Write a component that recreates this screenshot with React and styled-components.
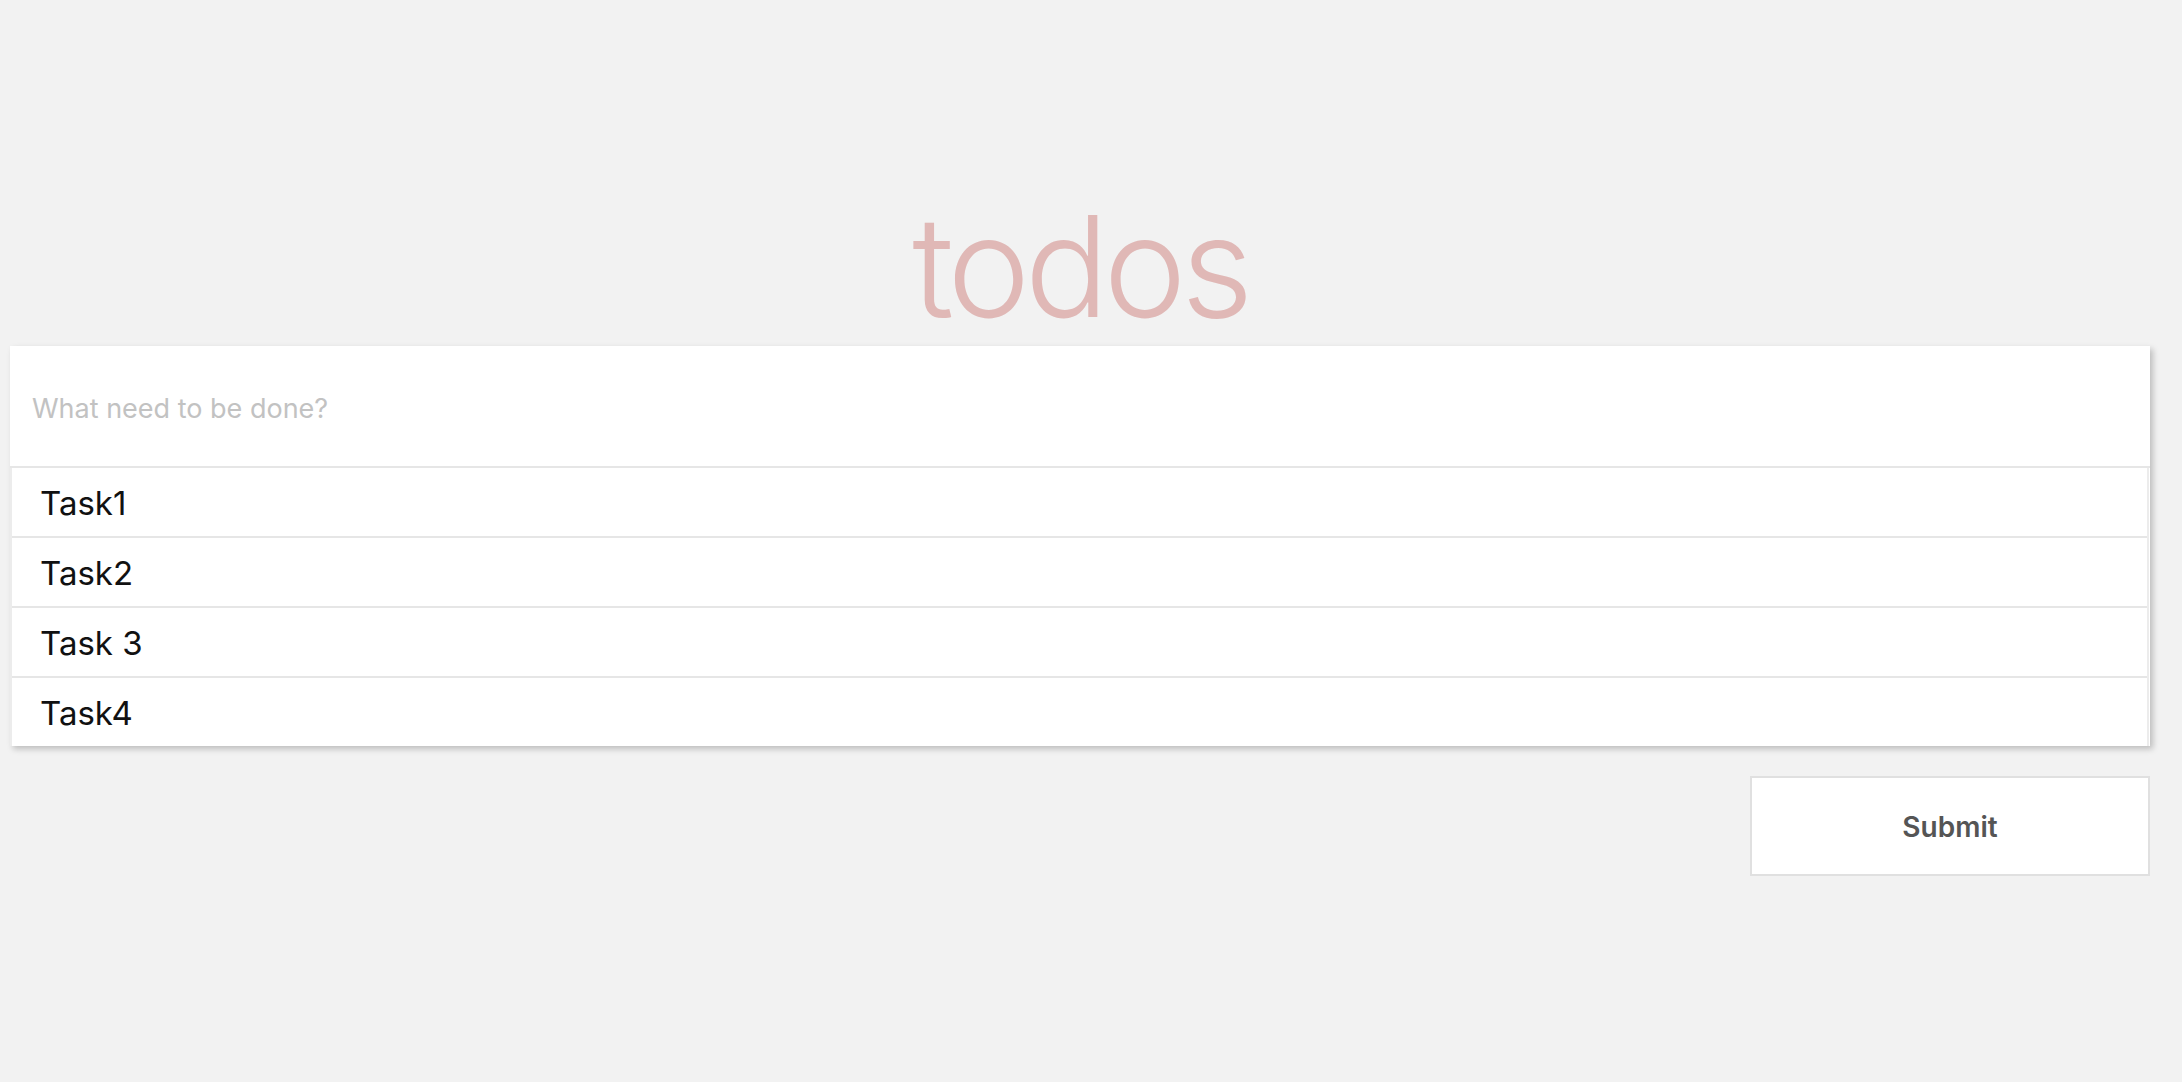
import React, { useState } from "react";
import styled, { createGlobalStyle } from "styled-components";

const GlobalStyle = createGlobalStyle`
  body {
    margin: 0;
    background: #f2f2f2;
    font-family: Inter, "Liberation Sans", sans-serif;
  }
`;

const Page = styled.div`
  display: flex;
  flex-direction: column;
  width: 2140px;
  padding: 196px 0 0 10px;
`;

const Title = styled.h1`
  margin: 0 0 10px 0;
  text-align: center;
  font-size: 140px;
  line-height: 1;
  font-weight: 300;
  letter-spacing: -5.5px;
  color: #e0b8b6;
`;

const Card = styled.div`
  display: flex;
  flex-direction: column;
  background: #fff;
  box-shadow: 3px 3px 6px rgba(0, 0, 0, 0.22);
`;

const Input = styled.input`
  box-sizing: content-box;
  height: 116px;
  padding: 4px 22px 0;
  border: none;
  border-bottom: 2px solid #e6e6e6;
  outline: none;
  font-family: inherit;
  font-size: 27px;
  color: #333;
  background: #fff;

  &::placeholder {
    color: #c2c2c2;
  }
`;

const List = styled.ul`
  margin: 0 1px 0 0;
  padding: 0;
  list-style: none;
  border-left: 2px solid #ececec;
  border-right: 2px solid #ececec;
`;

const Item = styled.li`
  display: flex;
  align-items: center;
  height: 66px;
  padding: 2px 0 0 28px;
  font-size: 33px;
  color: #111;
  border-bottom: ${(p) => (p.$last ? "none" : "2px solid #e6e6e6")};
`;

const Actions = styled.div`
  display: flex;
  justify-content: flex-end;
  margin-top: 30px;
`;

const SubmitButton = styled.button`
  box-sizing: border-box;
  width: 400px;
  height: 100px;
  padding-top: 3px;
  background: #fff;
  border: 2px solid #e0e0e0;
  font-family: inherit;
  font-size: 28px;
  font-weight: 600;
  color: #555;
  cursor: pointer;
`;

function App() {
  const [tasks] = useState(["Task1", "Task2", "Task 3", "Task4"]);
  const [text, setText] = useState("");

  return (
    <>
      <GlobalStyle />
      <Page>
        <Title>todos</Title>
        <Card>
          <Input
            placeholder="What need to be done?"
            value={text}
            onChange={(e) => setText(e.target.value)}
          />
          <List>
            {tasks.map((task, i) => (
              <Item key={i} $last={i === tasks.length - 1}>
                {task}
              </Item>
            ))}
          </List>
        </Card>
        <Actions>
          <SubmitButton>Submit</SubmitButton>
        </Actions>
      </Page>
    </>
  );
}

export default App;
